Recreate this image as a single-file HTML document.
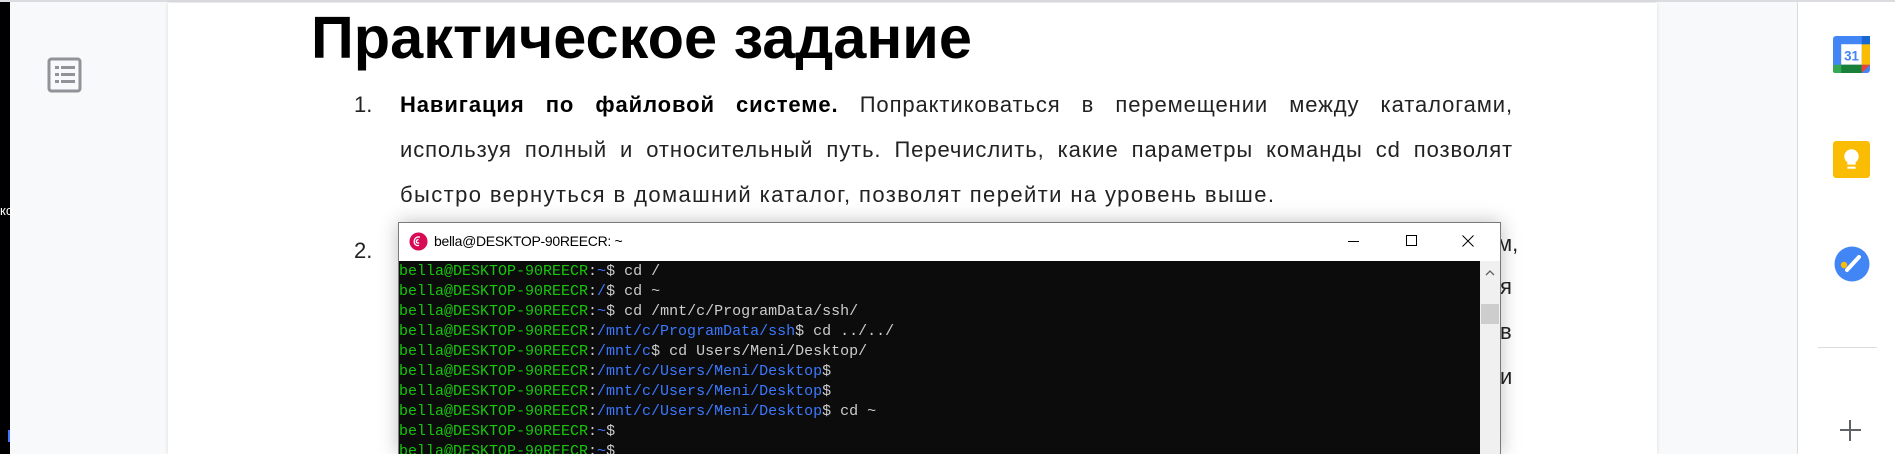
<!DOCTYPE html>
<html><head><meta charset="utf-8"><style>
*{margin:0;padding:0;box-sizing:border-box}
html,body{width:1895px;height:454px;overflow:hidden}
body{background:#f8f9fa;position:relative;font-family:"Liberation Sans",Arial,sans-serif}
.abs{position:absolute}
.black{left:0;top:0;width:10px;height:454px;background:#000}
.page{left:168px;top:3px;width:1489px;height:451px;background:#fff;box-shadow:0 0 4px rgba(0,0,0,.12)}
.topline{left:0;top:0;width:1895px;height:2px;background:#dadce0}
.right{left:1797px;top:2px;width:98px;height:452px;background:#fff;border-left:1px solid #dadce0}
h1{position:absolute;left:311px;top:3px;font-size:59.5px;font-weight:bold;color:#000;white-space:nowrap}
.ln{position:absolute;left:400px;width:1113px;font-size:22px;letter-spacing:0.9px;color:#222;text-align:justify;text-align-last:justify;height:26px;line-height:26px;white-space:nowrap;overflow:hidden}
.num{position:absolute;left:354px;font-size:22px;color:#222;line-height:26px}
.term{left:398px;top:222px;width:1103px;height:232px;background:#fff;border:1px solid #7a7a7a;border-bottom:none;box-shadow:0 0 18px rgba(0,0,0,.25);overflow:hidden}
.con{position:absolute;left:0;top:38px;width:1081px;height:200px;background:#0c0c0c;font-family:"Liberation Mono",monospace;font-size:15px;line-height:20px;padding-top:1px;white-space:pre}
.g{color:#16c60c}.b{color:#3b78ff}.w{color:#cccccc}
.sb{position:absolute;left:1081px;top:38px;width:20px;height:200px;background:#f0f0f0}
</style></head><body>
<div class="abs black"></div>
<div class="abs" style="left:0;top:203px;color:#fff;font-size:13px">ко</div>
<div class="abs" style="left:8px;top:430px;width:2px;height:12px;background:#3b78ff"></div>
<div class="abs topline"></div>
<svg class="abs" style="left:47px;top:57px" width="36" height="36" viewBox="0 0 36 36"><rect x="2" y="2" width="31" height="32" rx="2.5" fill="none" stroke="#919399" stroke-width="3"/><rect x="8" y="9" width="4" height="3" fill="#919399"/><rect x="14" y="9" width="14" height="3" fill="#919399"/><rect x="8" y="16" width="4" height="3" fill="#919399"/><rect x="14" y="16" width="14" height="3" fill="#919399"/><rect x="8" y="23" width="4" height="3" fill="#919399"/><rect x="14" y="23" width="14" height="3" fill="#919399"/></svg>
<div class="abs page"></div>
<h1>Практическое задание</h1>
<div class="num" style="top:92px">1.</div>
<div class="ln" style="top:92px"><b style="color:#000">Навигация по файловой системе.</b> Попрактиковаться в перемещении между каталогами,</div>
<div class="ln" style="top:137px">используя полный и относительный путь. Перечислить, какие параметры команды cd позволят</div>
<div class="ln" style="top:182px;text-align-last:left;letter-spacing:1.4px">быстро вернуться в домашний каталог, позволят перейти на уровень выше.</div>
<div class="num" style="top:238px">2.</div>
<div class="abs" style="left:1497px;top:231px;font-size:22px;color:#222">м,</div>
<div class="abs" style="left:1500px;top:274px;font-size:22px;color:#222">я</div>
<div class="abs" style="left:1500px;top:319px;font-size:22px;color:#222">в</div>
<div class="abs" style="left:1500px;top:364px;font-size:22px;color:#222">и</div>
<div class="abs term">
 <svg style="position:absolute;left:10px;top:9px" width="19" height="19" viewBox="0 0 20 20"><circle cx="10" cy="10" r="9.5" fill="#d70a53"/><path d="M11.5 5.5c-3-1-6 1-6 4.5s3 5 5 4M10 8c-1.5 0-2.5 1-2.3 2.3.2 1.3 1.8 1.8 3 1" fill="none" stroke="#fff" stroke-width="1.4"/></svg>
 <div style="position:absolute;left:35px;top:10px;font-size:14px;color:#000;letter-spacing:-0.3px">bella@DESKTOP-90REECR: ~</div>
 <div style="position:absolute;left:949px;top:18px;width:11px;height:1px;background:#000"></div>
 <div style="position:absolute;left:1007px;top:12px;width:11px;height:11px;border:1px solid #000"></div>
 <svg style="position:absolute;left:1063px;top:12px" width="12" height="12" viewBox="0 0 12 12"><path d="M0.5 0.5L11.5 11.5M11.5 0.5L0.5 11.5" stroke="#000" stroke-width="1"/></svg>
 <div class="con"><span class="g">bella@DESKTOP-90REECR</span><span class="w">:</span><span class="b">~</span><span class="w">$ cd /</span>
<span class="g">bella@DESKTOP-90REECR</span><span class="w">:</span><span class="b">/</span><span class="w">$ cd ~</span>
<span class="g">bella@DESKTOP-90REECR</span><span class="w">:</span><span class="b">~</span><span class="w">$ cd /mnt/c/ProgramData/ssh/</span>
<span class="g">bella@DESKTOP-90REECR</span><span class="w">:</span><span class="b">/mnt/c/ProgramData/ssh</span><span class="w">$ cd ../../</span>
<span class="g">bella@DESKTOP-90REECR</span><span class="w">:</span><span class="b">/mnt/c</span><span class="w">$ cd Users/Meni/Desktop/</span>
<span class="g">bella@DESKTOP-90REECR</span><span class="w">:</span><span class="b">/mnt/c/Users/Meni/Desktop</span><span class="w">$</span>
<span class="g">bella@DESKTOP-90REECR</span><span class="w">:</span><span class="b">/mnt/c/Users/Meni/Desktop</span><span class="w">$</span>
<span class="g">bella@DESKTOP-90REECR</span><span class="w">:</span><span class="b">/mnt/c/Users/Meni/Desktop</span><span class="w">$ cd ~</span>
<span class="g">bella@DESKTOP-90REECR</span><span class="w">:</span><span class="b">~</span><span class="w">$</span>
<span class="g">bella@DESKTOP-90REECR</span><span class="w">:</span><span class="b">~</span><span class="w">$</span></div>
 <div class="sb">
  <svg style="position:absolute;left:5px;top:8px" width="10" height="7" viewBox="0 0 10 7"><path d="M1 6L5 2L9 6" fill="none" stroke="#606060" stroke-width="1.3"/></svg>
  <div style="position:absolute;left:1px;top:43px;width:18px;height:20px;background:#cdcdcd"></div>
 </div>
</div>
<div class="abs right"></div>
<svg class="abs" style="left:1833px;top:36px" width="37" height="37" viewBox="0 0 36 36"><rect x="0" y="0" width="36" height="36" rx="3" fill="#4285f4"/><rect x="8" y="8" width="20" height="20" fill="#fff"/><rect x="28" y="8" width="8" height="20" fill="#fbbc04"/><rect x="0" y="28" width="28" height="8" rx="2" fill="#34a853"/><rect x="8" y="28" width="20" height="8" fill="#188038"/><path d="M28 28h8l-8 8z" fill="#ea4335"/><rect x="28" y="0" width="8" height="8" fill="#1967d2"/><text x="18" y="24" font-size="13" font-family="Liberation Sans" fill="#4285f4" text-anchor="middle" font-weight="bold">31</text></svg>
<svg class="abs" style="left:1833px;top:141px" width="37" height="37" viewBox="0 0 36 36"><rect width="36" height="36" rx="3" fill="#fbbc04"/><circle cx="18" cy="15" r="7" fill="#fff"/><rect x="14" y="19" width="8" height="4" fill="#fff"/><rect x="14" y="25" width="8" height="2" fill="#fff"/></svg>
<svg class="abs" style="left:1834px;top:246px" width="36" height="36" viewBox="0 0 36 36"><circle cx="18" cy="18" r="17.5" fill="#4285f4"/><path d="M13 24L25 11" stroke="#fff" stroke-width="4" stroke-linecap="round"/><circle cx="10" cy="19" r="3.2" fill="#fbbc04"/></svg>
<div class="abs" style="left:1818px;top:347px;width:59px;height:1px;background:#dadce0"></div>
<div class="abs" style="left:1840px;top:429px;width:21px;height:2px;background:#5f6368"></div>
<div class="abs" style="left:1849px;top:420px;width:2px;height:21px;background:#5f6368"></div>
</body></html>
